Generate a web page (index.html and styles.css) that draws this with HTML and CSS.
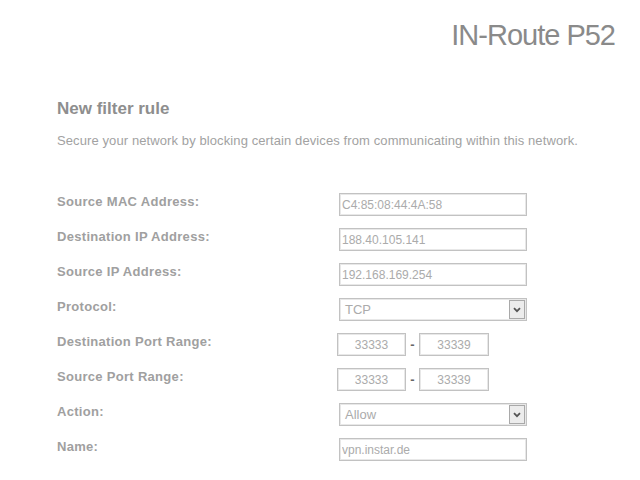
FILE: index.html
```html
<!DOCTYPE html>
<html lang="en">
<head>
<meta charset="utf-8">
<title>IN-Route P52 - New filter rule</title>
<link rel="stylesheet" href="styles.css">
</head>
<body>
<header class="header">
  <h1 class="brand">IN-Route P52</h1>
</header>
<main class="content">
  <h2 class="section-title">New filter rule</h2>
  <p class="section-desc">Secure your network by blocking certain devices from communicating within this network.</p>
  <form class="rule-form">
    <div class="row">
      <label class="field-label">Source MAC Address:</label>
      <input class="text-input" type="text" value="C4:85:08:44:4A:58">
    </div>
    <div class="row">
      <label class="field-label">Destination IP Address:</label>
      <input class="text-input" type="text" value="188.40.105.141">
    </div>
    <div class="row">
      <label class="field-label">Source IP Address:</label>
      <input class="text-input" type="text" value="192.168.169.254">
    </div>
    <div class="row">
      <label class="field-label">Protocol:</label>
      <div class="select-box">
        <span class="select-value">TCP</span>
        <span class="select-arrow"><svg width="8" height="6" viewBox="0 0 8 6"><path d="M1 1.2 L4 4.2 L7 1.2" fill="none" stroke="#555" stroke-width="1.8"/></svg></span>
      </div>
    </div>
    <div class="row">
      <label class="field-label">Destination Port Range:</label>
      <div class="port-range">
        <input class="port-input" type="text" value="33333">
        <span class="dash">-</span>
        <input class="port-input" type="text" value="33339">
      </div>
    </div>
    <div class="row">
      <label class="field-label">Source Port Range:</label>
      <div class="port-range">
        <input class="port-input" type="text" value="33333">
        <span class="dash">-</span>
        <input class="port-input" type="text" value="33339">
      </div>
    </div>
    <div class="row">
      <label class="field-label">Action:</label>
      <div class="select-box">
        <span class="select-value">Allow</span>
        <span class="select-arrow"><svg width="8" height="6" viewBox="0 0 8 6"><path d="M1 1.2 L4 4.2 L7 1.2" fill="none" stroke="#555" stroke-width="1.8"/></svg></span>
      </div>
    </div>
    <div class="row">
      <label class="field-label">Name:</label>
      <input class="text-input" type="text" value="vpn.instar.de">
    </div>
  </form>
</main>
</body>
</html>
```
FILE: styles.css
```css
* {
  box-sizing: border-box;
}

html, body {
  margin: 0;
  padding: 0;
  background: #ffffff;
}

body {
  font-family: "Liberation Sans", Arial, Helvetica, sans-serif;
  color: #9a9a9a;
}

.header {
  padding: 21px 25px 0 0;
  text-align: right;
}

.brand {
  margin: 0;
  font-size: 29px;
  line-height: 29px;
  font-weight: normal;
  letter-spacing: -1px;
  color: #8a8a8a;
}

.content {
  padding-left: 57px;
}

.section-title {
  margin: 50px 0 0 0;
  font-size: 17px;
  line-height: 17px;
  font-weight: bold;
  color: #8e8e8e;
}

.section-desc {
  margin: 17px 0 0 0;
  font-size: 13px;
  line-height: 13px;
  letter-spacing: 0.1px;
  color: #a2a2a2;
}

.rule-form {
  margin-top: 46px;
  display: flex;
  flex-direction: column;
  gap: 12px;
}

.row {
  display: grid;
  grid-template-columns: 282px 188px;
  align-items: start;
  height: 23px;
}

.field-label {
  padding-top: 2px;
  font-size: 13px;
  line-height: 13px;
  font-weight: bold;
  letter-spacing: 0.3px;
  color: #a0a0a0;
}

.text-input {
  width: 188px;
  height: 23px;
  margin: 0;
  padding: 0 0 0 2px;
  border: 1px solid #c2c2c2;
  box-shadow: inset 0 0 0 1px #e8e8e8;
  font-family: "Liberation Sans", Arial, sans-serif;
  font-size: 12px;
  color: #ababab;
  background: #fff;
  outline: none;
}

.select-box {
  width: 188px;
  height: 23px;
  display: flex;
  align-items: stretch;
  border: 1px solid #c2c2c2;
  box-shadow: inset 0 0 0 1px #e8e8e8;
  background: #fff;
}

.select-value {
  flex: 1;
  display: flex;
  align-items: center;
  padding-left: 5px;
  font-size: 13px;
  color: #ababab;
}

.select-arrow {
  width: 16px;
  margin: 1px;
  display: flex;
  align-items: center;
  justify-content: center;
  background: #ececec;
  border: 1px solid #a9a9a9;
}

.port-range {
  display: flex;
  align-items: center;
  margin-left: -2px;
  width: 160px;
}

.port-input {
  width: 69px;
  height: 23px;
  margin: 0;
  padding: 0;
  border: 1px solid #c2c2c2;
  box-shadow: inset 0 0 0 1px #e8e8e8;
  font-family: "Liberation Sans", Arial, sans-serif;
  font-size: 12px;
  text-align: center;
  color: #ababab;
  background: #fff;
  outline: none;
}

.port-input + .dash + .port-input {
  width: 70px;
}

.dash {
  width: 13px;
  text-align: center;
  font-size: 13px;
  font-weight: bold;
  color: #666;
}
```
